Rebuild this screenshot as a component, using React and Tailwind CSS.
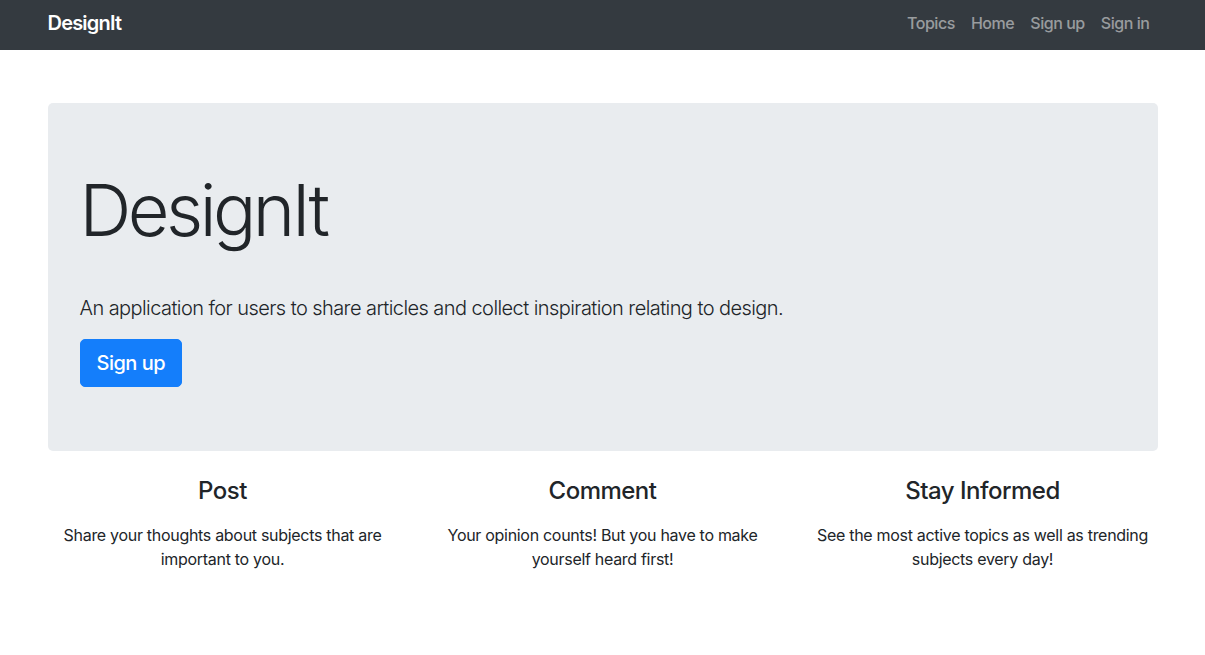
import React from 'react'

const features = [
  { title: 'Post', text: 'Share your thoughts about subjects that are important to you.' },
  { title: 'Comment', text: 'Your opinion counts! But you have to make yourself heard first!' },
  { title: 'Stay Informed', text: 'See the most active topics as well as trending subjects every day!' }
]

const App = () => {
  return (
    <div className="min-h-screen bg-white text-[#212529] font-['Inter','Noto_Sans',sans-serif]">
      {/* Navbar */}
      <nav className="h-[50px] bg-[#343a40]">
        <div className="mx-auto flex h-full w-[1140px] items-center justify-between px-[15px] pb-1">
          <a className="text-[20px] font-semibold tracking-[-0.8px] text-white">DesignIt</a>
          <ul className="flex items-center">
            {['Topics', 'Home', 'Sign up', 'Sign in'].map((l) => (
              <li key={l}>
                <a className="block px-2 text-[16px] font-medium tracking-[-0.45px] text-white/50">{l}</a>
              </li>
            ))}
          </ul>
        </div>
      </nav>

      <div className="mx-auto w-[1140px] px-[15px]">
        {/* Jumbotron */}
        <div className="mt-[53px] rounded-[5px] bg-[#e9ecef] px-8 py-16">
          <h1 className="text-[72px] font-light leading-[1.2] tracking-[-3.5px]">DesignIt</h1>
          <p className="mt-[40px] text-[20px] font-light leading-[1.5] tracking-[-0.57px]">
            An application for users to share articles and collect inspiration relating to design.
          </p>
          <button className="mt-4 rounded-[5px] border border-[#147efb] bg-[#147efb] px-4 py-2 text-[20px] font-medium leading-[1.5] tracking-[-0.5px] text-white">
            Sign up
          </button>
        </div>

        {/* Features */}
        <div className="mx-[-15px] mt-[26px] grid grid-cols-3">
          {features.map((f) => (
            <div key={f.title} className="px-[15px] text-center">
              <h4 className="text-[24px] font-medium leading-[1.2] tracking-[-0.5px]">{f.title}</h4>
              <p className="mt-[17px] text-[16px] leading-[1.5] tracking-[-0.3px]">{f.text}</p>
            </div>
          ))}
        </div>
      </div>
    </div>
  )
}

export default App
